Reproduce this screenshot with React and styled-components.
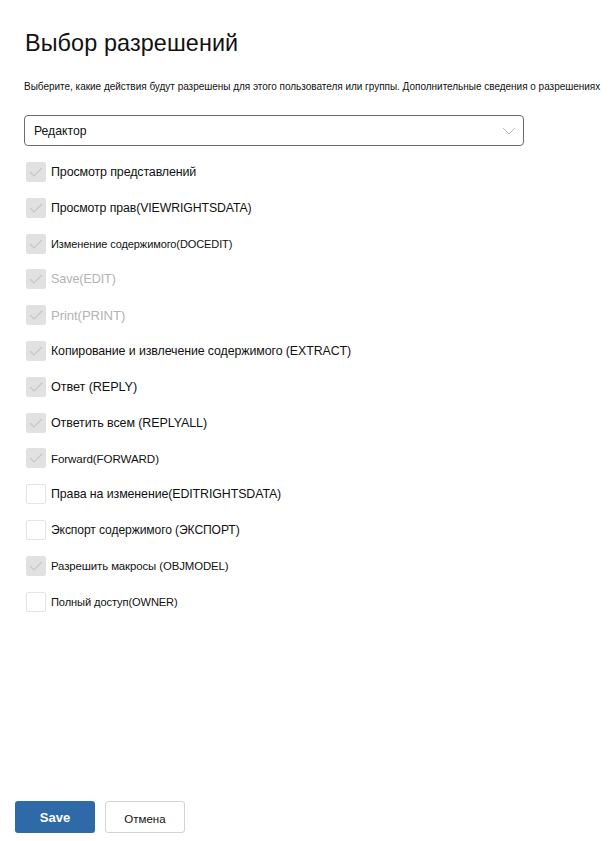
import React from "react";
import styled, { createGlobalStyle } from "styled-components";

const GlobalStyle = createGlobalStyle`
    body {
        margin: 0;
        background: #ffffff;
        font-family: "Segoe UI", "Liberation Sans", Arial, sans-serif;
    }
`;

const permissions = [
    { label: "Просмотр представлений", checked: true, size: 12.5, spacing: -0.15 },
    { label: "Просмотр прав(VIEWRIGHTSDATA)", checked: true, size: 12.3 },
    { label: "Изменение содержимого(DOCEDIT)", checked: true, size: 11 },
    { label: "Save(EDIT)", checked: true, muted: true, size: 12.6 },
    { label: "Print(PRINT)", checked: true, muted: true, size: 13.2 },
    { label: "Копирование и извлечение содержимого (EXTRACT)", checked: true, size: 12.4 },
    { label: "Ответ (REPLY)", checked: true, size: 12.7 },
    { label: "Ответить всем (REPLYALL)", checked: true, size: 12.5 },
    { label: "Forward(FORWARD)", checked: true, size: 11.6 },
    { label: "Права на изменение(EDITRIGHTSDATA)", checked: false, size: 12.4 },
    { label: "Экспорт содержимого (ЭКСПОРТ)", checked: false, size: 12.1 },
    { label: "Разрешить макросы (OBJMODEL)", checked: true, size: 11.4 },
    { label: "Полный доступ(OWNER)", checked: false, size: 11.1 },
];

const App = () => {
    return (
        <>
            <GlobalStyle />
            <Page>
                <Content>
                    <Title>Выбор разрешений</Title>
                    <Description>
                        Выберите, какие действия будут разрешены для этого пользователя или группы. Дополнительные сведения о разрешениях
                    </Description>
                    <Select>
                        <SelectValue>Редактор</SelectValue>
                        <svg width="14" height="8" viewBox="0 0 14 8">
                            <path d="M1 1l6 6 6-6" fill="none" stroke="#b9b9b9" strokeWidth="1" />
                        </svg>
                    </Select>
                    <PermissionList>
                        {permissions.map((item) => (
                            <PermissionRow key={item.label}>
                                <Box $checked={item.checked}>
                                    {item.checked ? (
                                        <svg width="14" height="10" viewBox="0 0 14 10">
                                            <path d="M1 5l4 4 8-8" fill="none" stroke="#c7c7c7" strokeWidth="1.2" />
                                        </svg>
                                    ) : null}
                                </Box>
                                <Label $muted={item.muted} $size={item.size} $spacing={item.spacing}>
                                    {item.label}
                                </Label>
                            </PermissionRow>
                        ))}
                    </PermissionList>
                </Content>
                <Footer>
                    <PrimaryBtn>Save</PrimaryBtn>
                    <SecondaryBtn>Отмена</SecondaryBtn>
                </Footer>
            </Page>
        </>
    );
};

export default App;

const Page = styled.div`
    width: 613px;
    height: 841px;
    display: flex;
    flex-direction: column;
    justify-content: space-between;
    overflow: hidden;
`;

const Content = styled.div`
    padding: 28px 0 0 24px;
    display: flex;
    flex-direction: column;
`;

const Title = styled.h1`
    margin: 0 0 0 1px;
    font-family: "Segoe UI", "Liberation Sans", Arial, sans-serif;
    font-size: 23.4px;
    font-weight: 400;
    color: #111111;
    line-height: 30px;
    letter-spacing: 0.1px;
`;

const Description = styled.p`
    margin: 22px 0 0;
    font-size: 10px;
    color: #111111;
    white-space: nowrap;
    letter-spacing: -0.02px;
    line-height: 14px;
`;

const Select = styled.div`
    margin-top: 21px;
    width: 500px;
    height: 31px;
    box-sizing: border-box;
    border: 1px solid #6b6b6b;
    border-radius: 4px;
    display: flex;
    align-items: center;
    justify-content: space-between;
    padding: 0 7px 0 9px;
`;

const SelectValue = styled.span`
    font-size: 12.2px;
    color: #111111;
`;

const PermissionList = styled.div`
    margin-top: 16px;
    display: flex;
    flex-direction: column;
    gap: 15.8px;
`;

const PermissionRow = styled.div`
    display: flex;
    align-items: center;
    gap: 5px;
    height: 20px;
`;

const Box = styled.div`
    margin-left: 2px;
    width: 20px;
    height: 20px;
    box-sizing: border-box;
    border-radius: 2px;
    display: flex;
    align-items: center;
    justify-content: center;
    background: ${(p) => (p.$checked ? "#e1e1e1" : "#ffffff")};
    border: 1px solid ${(p) => (p.$checked ? "#e1e1e1" : "#e3e3e3")};
`;

const Label = styled.span`
    font-size: ${(p) => p.$size}px;
    color: ${(p) => (p.$muted ? "#b3b3b3" : "#111111")};
    letter-spacing: ${(p) => (p.$spacing !== undefined ? p.$spacing : -0.1)}px;
    white-space: nowrap;
`;

const Footer = styled.div`
    display: flex;
    gap: 10px;
    padding: 0 0 8px 15px;
`;

const PrimaryBtn = styled.button`
    width: 80px;
    height: 32px;
    border: none;
    border-radius: 3px;
    background: #2f6aa8;
    color: #ffffff;
    font-family: "Segoe UI", "Liberation Sans", Arial, sans-serif;
    font-weight: bold;
    font-size: 13px;
    cursor: pointer;
`;

const SecondaryBtn = styled.button`
    width: 80px;
    height: 32px;
    border: 1px solid #d3d3d3;
    border-radius: 3px;
    background: #ffffff;
    color: #111111;
    font-family: "Segoe UI", "Liberation Sans", Arial, sans-serif;
    font-size: 11.5px;
    padding-top: 5px;
    cursor: pointer;
`;
